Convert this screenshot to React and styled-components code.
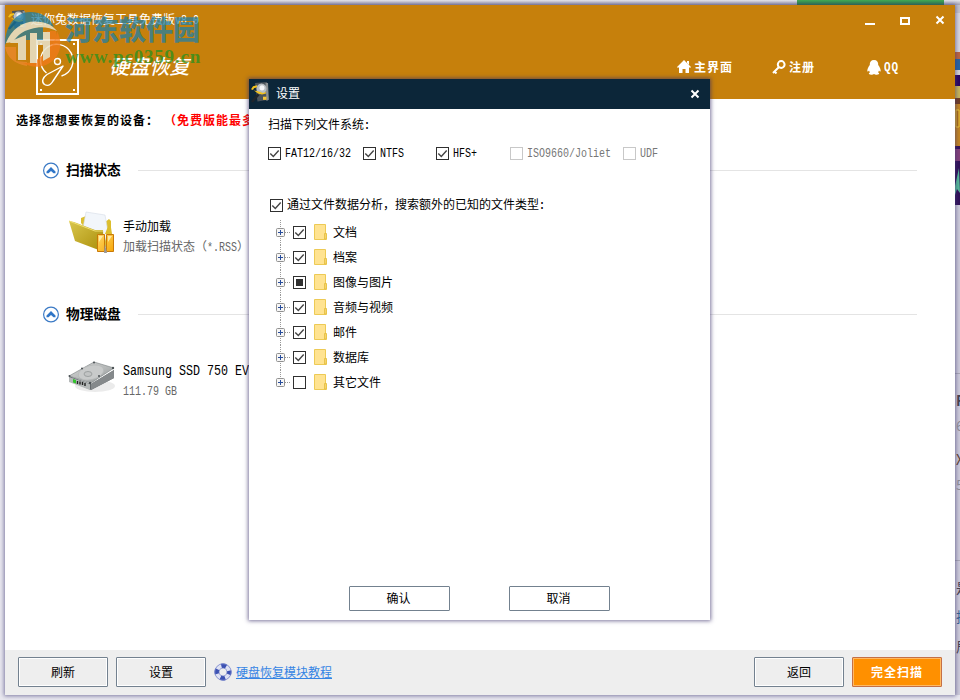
import React from "react";
import styled, { createGlobalStyle, css } from "styled-components";

const Global = createGlobalStyle`
  * { box-sizing: border-box; }
  html, body { margin: 0; padding: 0; width: 960px; height: 700px; overflow: hidden; }
  body { font: 12px/16px "Noto Sans CJK SC", sans-serif; color: #000; }
`;

const Desktop = styled.div`
  position: relative;
  width: 960px;
  height: 700px;
  background: #e9e8ef;
  display: grid;
  grid-template-rows: 5px 690px 5px;
  overflow: hidden;
`;
const TopStrip = styled.div`
  display: flex;
  padding-left: 797px;
  background: linear-gradient(#e6e6ec, #a3a3b4);
  &::after { content: ""; width: 147px; height: 5px; background: linear-gradient(#44ab55, #2b7f47); }
`;
const Middle = styled.div`
  display: grid;
  grid-template-columns: 5px 950px 5px;
`;
const Window = styled.main`
  grid-column: 2;
  position: relative;
  z-index: 1;
  background: #fff;
  display: flex;
  flex-direction: column;
  box-shadow: 0 0 4px 1px rgba(60, 55, 115, 0.62);
`;
const EdgeStrip = styled.div`
  width: 5px;
  height: 690px;
  overflow: hidden;
  background: #ceccda;
`;
const Header = styled.header`
  height: 94px;
  background: #c6800c;
  color: #fff;
  display: flex;
  flex-direction: column;
`;
const TitleBar = styled.div`
  height: 30px;
  display: flex;
  align-items: center;
  padding-left: 3px;
`;
const AppTitle = styled.span`
  margin-left: 5px;
  flex: 1;
`;
const Latin = styled.span`
  display: inline-block;
  font-family: "Liberation Mono", monospace;
  font-size: ${(p) => p.$size || 10}px;
  font-weight: ${(p) => (p.$bold ? 700 : 400)};
  transform: scaleY(1.2);
`;
const WindowButtons = styled.div`
  display: flex;
  width: 95px;
  svg { display: block; }
`;
const Banner = styled.div`
  height: 64px;
  display: flex;
  padding: 4px 0 0 31px;
`;
const BannerTitle = styled.h1`
  margin: 15px 0 0 29px;
  width: 90px;
  font-size: 20px;
  line-height: 24px;
  font-weight: 500;
  transform: skewX(-14deg);
`;
const Nav = styled.nav`
  flex: 1;
  display: grid;
  grid-template-columns: 95px 95px 88px;
  justify-content: end;
  padding-top: 19px;
`;
const NavItem = styled.a`
  display: flex;
  height: 18px;
  align-items: center;
  gap: 3px;
  font-weight: 700;
  letter-spacing: 1px;
`;
const Body = styled.section`
  flex: 1;
`;
const Prompt = styled.div`
  height: 42px;
  padding: 12px 0 0 11px;
  font-weight: 700;
  letter-spacing: 1px;
  line-height: 18px;
  white-space: nowrap;
`;
const Warning = styled.span`
  color: #f00;
  margin-left: 11px;
`;
const Group = styled.section`
  height: 144px;
  padding: 18px 38px 0 38px;
`;
const GroupHead = styled.div`
  display: flex;
  height: 22px;
  align-items: center;
  &::after { content: ""; flex: 1; height: 1px; background: #e4e4e4; }
`;
const GroupTitle = styled.h2`
  margin: -2px 0 0 6px;
  width: 72px;
  font-size: 13.7px;
  font-weight: 700;
`;
const Device = styled.div`
  display: flex;
  padding: ${(p) => p.$top || 30}px 0 0 25px;
`;
const DeviceText = styled.div`
  margin: ${(p) => (p.$disk ? -2 : 5)}px 0 0 7px;
  line-height: 20px;
  white-space: nowrap;
  small { display: block; margin-top: ${(p) => (p.$disk ? -1 : 0)}px; font-size: 12px; color: #666; }
`;
const Footer = styled.footer`
  height: 45px;
  background: #eee;
  display: flex;
  align-items: center;
  padding: 0 13px 1px;
`;
const Button = styled.button`
  width: 90px;
  height: 30px;
  margin-right: 8px;
  padding: 0;
  border: 1px solid #73818f;
  border-radius: 1px;
  box-shadow: inset 0 0 0 1px #fff;
  background: #eee;
  font: inherit;
  color: #000;
  ${(p) => p.$primary && css`
    margin-right: 0;
    background: #ff9000;
    border-color: #c57045;
    box-shadow: inset 0 0 0 1px #ffb963;
    color: #fff;
    font-weight: 700;
    letter-spacing: 1px;
  `}
  ${(p) => p.$dialog && css`
    width: 101px;
    height: 25px;
    margin: 0;
    background: #fff;
    padding: 0 2px 1px 0;
  `}
`;
const HelpLink = styled.a`
  flex: 1;
  display: flex;
  align-items: center;
  gap: 4px;
  color: #3584e4;
  span { border-bottom: 1px solid #3584e4; line-height: 13px; }
`;
const Dialog = styled.section`
  position: absolute;
  z-index: 3;
  left: 249px;
  top: 79px;
  width: 461px;
  height: 541px;
  background: #fff;
  box-shadow: 0 0 4px 1px rgba(55, 45, 105, 0.65);
  display: flex;
  flex-direction: column;
`;
const DialogBar = styled.header`
  height: 30px;
  background: #0c2639;
  color: #fff;
  display: flex;
  align-items: center;
  padding: 0 10px 3px 2px;
  span { flex: 1; margin-left: 7px; }
  svg:last-child { margin-top: 3px; }
`;
const DialogBody = styled.div`
  flex: 1;
  padding: 7px 20px 0 19px;
`;
const Systems = styled.div`
  display: grid;
  grid-template-columns: 95px 73px 74px 113px 60px;
  height: 20px;
  margin: 8px 0 32px;
  ${Latin} { margin-top: 3px; }
`;
const Check = styled.label`
  display: flex;
  align-items: center;
  gap: 4px;
  white-space: nowrap;
  color: ${(p) => (p.$off ? "#777" : "#000")};
`;
const AllTypes = styled.div`
  padding-left: 2px;
  height: 20px;
  display: flex;
  span { margin-top: 1px; }
`;
const Tree = styled.ul`
  margin: 5px 0 0 8px;
  padding: 0;
  list-style: none;
`;
const TreeRow = styled.li`
  height: 25px;
  display: flex;
  align-items: center;
  svg { display: block; }
`;
const TreeText = styled.span`
  margin-left: 6px;
  margin-top: -2px;
`;
const FolderGap = styled.span`
  margin: -1px 0 0 8px;
`;
const DialogActions = styled.div`
  display: flex;
  justify-content: center;
  gap: 59px;
  height: 34px;
`;
const Watermark = styled.div`
  position: absolute;
  z-index: 2;
  left: 4px;
  top: 10px;
  display: flex;
  pointer-events: none;
  svg { opacity: 0.86; }
`;
const WatermarkText = styled.div`
  margin-left: 3px;
  display: flex;
  flex-direction: column;
`;
const SiteName = styled.span`
  font: 900 27px/28px "Noto Sans CJK SC", sans-serif;
  color: rgba(28, 127, 170, 0.72);
  margin-top: 5px;
  white-space: nowrap;
`;
const SiteUrl = styled.span`
  font: 700 19px/20px "Liberation Serif", serif;
  color: rgba(45, 145, 30, 0.78);
  margin-top: 4px;
  letter-spacing: 0.8px;
`;

const Cross = () => (
  <svg width="10" height="10" viewBox="0 0 10 10"><path d="M1.5 1.5l7 7M8.5 1.5l-7 7" stroke="#fff" strokeWidth="2" /></svg>
);

const AppIcon = ({ size = 18, height = 20 }) => (
  <svg width={size} height={height} viewBox="0 0 18 20" preserveAspectRatio="none">
    <path d="M4 1l12-1 1.500 17-11 1.500z" fill="#4c545b" />
    <path d="M14.500 1H17l.8 16-2.300 1z" fill="#8b9092" />
    <circle cx="10.500" cy="6.500" r="5" fill="#b9bec2" />
    <circle cx="11" cy="5.500" r="2.500" fill="#f4f5f6" />
    <path d="M6 3L2 4 0 7l2 .5 1-1.500L6 5zM3 8l5 1 4 1.500 3-1v1.500l-4 1-4-1z" fill="#f3c21d" />
    <path d="M0 18.500L6.500 11l2 1.500L2 19.500z" fill="#20252b" />
    <path d="M12 14h3.500v3H12z" fill="#f4c536" />
  </svg>
);

const BannerDrive = () => (
  <svg width="44" height="58" viewBox="0 0 44 58" fill="none" stroke="#fff">
    <rect x="1" y="1" width="41" height="54" strokeWidth="2" />
    <path d="M10.500 34a16.200 16.200 0 1 1 15 3" strokeWidth="1.400" />
    <circle cx="21.500" cy="22.500" r="3" strokeWidth="1.400" />
    <path d="M27 27L11 35.500C6 39 5.500 43 8.500 45.500 12 47.500 15 45.500 17 42z" strokeWidth="1.400" strokeLinejoin="round" />
    <g fill="#fff" stroke="none"><rect x="4" y="4" width="2" height="2" /><rect x="37" y="4" width="2" height="2" /><rect x="4" y="50" width="2" height="2" /><rect x="37" y="50" width="2" height="2" /></g>
  </svg>
);

const HomeIcon = () => (
  <svg width="14" height="14" viewBox="0 0 14 14" fill="#fff"><path d="M7 0l7 7-1 1-1-1v6H8.500V9h-3v4H2V7L1 8 0 7z" /><path d="M10 1h2v4l-2-2z" /></svg>
);
const KeyIcon = () => (
  <svg width="14" height="14" viewBox="0 0 14 14"><circle cx="9.200" cy="4.500" r="3.400" fill="none" stroke="#fff" strokeWidth="2" /><path d="M7 7l-6 6M2.500 11.500l2 2" stroke="#fff" strokeWidth="2" /></svg>
);
const QQIcon = () => (
  <svg width="14" height="15" viewBox="0 0 14 15" fill="#fff"><path d="M7 0C4 0 2.500 2 2.800 5 1.500 7 .5 8 .3 11c.4 1 1.200.4 1.700-.5.300.8.500 1.200 1 1.700-1 .6-1.500 1.200-1 1.800 1 1 4 .8 5 0 1 .8 4 1 5 0 .5-.6 0-1.200-1-1.800.5-.5.700-.9 1-1.700.5.900 1.300 1.500 1.700.5-.2-3-1.200-4-2.500-6C11.500 2 10 0 7 0z" /></svg>
);
const Chevron = () => (
  <svg width="17" height="17" viewBox="0 0 17 17"><circle cx="8" cy="8.500" r="7.400" fill="#fff" stroke="#3b7ac5" strokeWidth="1.200" /><path d="M3.500 9.500L8 5l4.500 4.500v1.800h-2L8 9l-2.500 2.300h-2z" fill="#2f75c7" /></svg>
);

const OpenFolder = () => (
  <svg width="48" height="43" viewBox="0 0 48 43">
    <defs>
      <linearGradient id="folder" x1="0" y1="0" x2="1" y2="1"><stop offset="0" stopColor="#d9c64c" /><stop offset="1" stopColor="#a98d08" /></linearGradient>
      <linearGradient id="bar" x1="0" y1="0" x2="1" y2="1"><stop offset="0" stopColor="#ffd766" /><stop offset="1" stopColor="#f7a708" /></linearGradient>
    </defs>
    <path d="M13 12V7l5-2 18 7 5-4 2 2v19l-7 9z" fill="#dcbf31" />
    <path d="M18 1l19 3 3 17-4 11-21-15z" fill="#f2f6fb" stroke="#d5dce6" strokeWidth=".6" />
    <path d="M1 10l5 1 21 8 8 0 1 22-29-11z" fill="url(#folder)" />
    <path d="M1 10l26 10h8" fill="none" stroke="#f0df70" />
    <path d="M37 23l5-13 2 13z" fill="#dcbd2b" />
    <path d="M29.500 23.500h7v17h-7zM38.500 23.500h7v17h-7z" fill="url(#bar)" stroke="#c97907" />
    <path d="M31 25h4l-4 6zM40 25h4l-4 6z" fill="#fff2bd" opacity=".8" />
    <path d="M37 33l2 9h-3z" fill="#999" />
  </svg>
);

const HardDrive = () => (
  <svg width="48" height="34" viewBox="0 0 48 34">
    <defs><linearGradient id="metal" x1="0" y1="0" x2="1" y2="1"><stop offset="0" stopColor="#d8d8d8" /><stop offset=".55" stopColor="#b5b8b8" /><stop offset="1" stopColor="#8b8f8f" /></linearGradient></defs>
    <ellipse cx="27" cy="25" rx="20" ry="6" fill="#ddd" opacity=".6" />
    <path d="M1 15l22 8 23-14v8L23 29 1 20z" fill="#64696c" />
    <path d="M23 23l23-14v8L23 29z" fill="#85898b" />
    <path d="M1 15L26 1l20 6-23 15z" fill="url(#metal)" stroke="#777d80" strokeWidth=".6" />
    <ellipse cx="23" cy="11.500" rx="13" ry="7" fill="#c8caca" stroke="#b3b5b5" strokeWidth=".6" transform="rotate(-15 23 11.500)" />
    <ellipse cx="20" cy="13" rx="4" ry="2.500" fill="#c2c4c4" stroke="#8d9191" strokeWidth=".7" />
    <path d="M1 16l21 7v6L1 21z" fill="#b5b9b9" />
    <path d="M5 18l3 1v3.500l-3-1z" fill="#30c32a" />
    <path d="M9.500 20v3M12 20.500v3M14.500 21v3M17 22v3" stroke="#222" strokeWidth="1.400" />
    <g fill="#4b5154"><circle cx="1.500" cy="15" r="1" /><circle cx="22" cy="22" r="1.200" /><circle cx="26" cy="1.500" r="1" /><circle cx="45" cy="7" r="1.200" /><circle cx="31" cy="15" r="1" /><circle cx="14" cy="7.500" r="1" /></g>
  </svg>
);

const BoxIcon = ({ state, off }) => (
  <svg width="13" height="13" viewBox="0 0 13 13">
    <rect x=".5" y=".5" width="12" height="12" fill="#fff" stroke={off ? "#c8c8c8" : "#303030"} />
    {state === "on" && <path d="M2.300 6.500l3 3 5.400-6" fill="none" stroke="#444" strokeWidth="1.400" />}
    {state === "part" && <rect x="3" y="3" width="7" height="7" fill="#303030" />}
  </svg>
);

const Branch = ({ last }) => (
  <svg width="17" height="25" viewBox="0 0 17 25">
    <path d={last ? "M4.500 0v12" : "M4.500 0v25"} stroke="#999" strokeDasharray="1 1" />
    <path d="M9 12.500h5" stroke="#999" strokeDasharray="1 1" />
    <rect x=".5" y="8.500" width="8" height="8" rx="1" fill="#f6f6f6" stroke="#919191" />
    <path d="M2 12.500h5M4.500 10v5" stroke="#264b9b" />
  </svg>
);
const FolderIcon = () => (
  <svg width="13" height="16" viewBox="0 0 13 16">
    <path d="M.5.5h11v9h1v6H.5z" fill="#ffe391" stroke="#edca55" />
    <path d="M10.500 15V9.500H12V15z" fill="#ffe391" stroke="#e3bb39" strokeWidth=".8" />
  </svg>
);

const Lifebuoy = () => (
  <svg width="18" height="18" viewBox="0 0 18 18">
    <circle cx="9" cy="9" r="6.200" fill="none" stroke="#dfe2f3" strokeWidth="4.500" />
    <circle cx="9" cy="9" r="6.200" fill="none" stroke="#3c51b3" strokeWidth="4.500" strokeDasharray="4.870 4.870" strokeDashoffset="2.435" />
    <circle cx="9" cy="9" r="8.200" fill="none" stroke="#7583c9" strokeWidth=".8" />
    <circle cx="9" cy="9" r="4" fill="none" stroke="#7583c9" strokeWidth=".6" />
  </svg>
);

const SiteLogo = () => (
  <svg width="58" height="58" viewBox="0 0 58 58">
    <path d="M1 35C1 14 13 2 26 2c12 0 20 6 24 15-10-5-19-6-27-3C12 17 6 25 1 35z" fill="#197ca6" opacity=".85" />
    <path d="M9 28c6-8 15-11 30-11v13H8z" fill="#197ca6" opacity=".82" />
    <path d="M2 33C8 17 22 9 37 12c7 1 12 4 16 9-8-4-17-5-26-2-9 2-14 7-18 13z" fill="#e9e4cd" />
    <path d="M1 37h11v14l11 1v4C10 54 3 47 1 37z" fill="#f08a32" opacity=".8" />
    <path d="M53 21c7 13 3 28-11 34-8 3-16 2-23-2 8 0 13-2 17-6 9-4 15-14 17-26z" fill="#f27a1a" opacity=".9" />
    <path d="M43 21h9c1 14-5 23-13 28V30h4z" fill="#f27a1a" opacity=".85" />
    <path d="M7 31l15-6v25h-8V33H6zM26 23h7v7h6v-8h7v25l-7 4V35h-6v18h-7z" fill="#e9e4cd" />
  </svg>
);

const EdgeDetail = () => (
  <svg width="5" height="690" viewBox="0 0 5 690">
    <path d="M0 0h5v8H0z" fill="#c5c4cc" /><path d="M0 8h5v39H0z" fill="#d8d7df" />
    <path d="M0 47h5v7H0z" fill="#bd6540" /><path d="M0 54h5v11H0z" fill="#2465a4" />
    <path d="M0 65h5v5H0z" fill="#d5d4d8" /><path d="M0 70h5v11H0z" fill="#28045f" />
    <path d="M0 81h5v12H0z" fill="#c7b559" /><path d="M0 93h5v6H0z" fill="#713d22" />
    <path d="M0 99h5v42H0z" fill="#c48522" /><path d="M1 105h3v17H1z" stroke="#f0ce36" fill="#ad6b15" />
    <path d="M0 141h5v59H0z" fill="#321158" /><path d="M0 144h5v12H0z" fill="#834079" /><path d="M0 181l4-18 1 25-3-4-2 6z" fill="#56bd99" />
    <path d="M0 368.500h5M0 555.500h5" stroke="#aaa8b5" />
  </svg>
);
const EdgeWrap = styled.aside`
  position: absolute;
  z-index: 2;
  right: 0;
  top: 5px;
  width: 4px;
  height: 690px;
  overflow: hidden;
`;
const EdgeLetters = styled.div`
  padding-top: ${(p) => p.$top}px;
  font-size: 14px;
  line-height: 20px;
  color: ${(p) => p.$color || "#474151"};
  font-weight: ${(p) => (p.$bold ? 700 : 400)};
`;

const systems = [
  ["FAT12/16/32", "on"], ["NTFS", "on"], ["HFS+", "on"], ["ISO9660/Joliet", "", true], ["UDF", "", true],
];
const types = [
  ["文档", "on"], ["档案", "on"], ["图像与图片", "part"], ["音频与视频", "on"], ["邮件", "on"], ["数据库", "on"], ["其它文件", ""],
];

export default function App() {
  return (
    <Desktop>
      <Global />
      <TopStrip />
      <Middle>
        <Window>
          <Header>
            <TitleBar>
              <AppIcon />
              <AppTitle>迷你兔数据恢复工具免费版<Latin>v8.0</Latin></AppTitle>
              <WindowButtons>
                <svg width="90" height="14" viewBox="0 0 90 14"><path d="M5 11h10" stroke="#fff" strokeWidth="2" /><path d="M41 5h8v6h-8z" stroke="#fff" strokeWidth="2" fill="none" /><path d="M76.500 3.500l7 7M83.500 3.500l-7 7" stroke="#fff" strokeWidth="2" /></svg>
              </WindowButtons>
            </TitleBar>
            <Banner>
              <BannerDrive />
              <BannerTitle>硬盘恢复</BannerTitle>
              <Nav>
                <NavItem><HomeIcon />主界面</NavItem>
                <NavItem><KeyIcon />注册</NavItem>
                <NavItem><QQIcon /><Latin $bold $size={11}>QQ</Latin></NavItem>
              </Nav>
            </Banner>
          </Header>
          <Body>
            <Prompt>选择您想要恢复的设备：<Warning>（免费版能最多</Warning></Prompt>
            <Group>
              <GroupHead><Chevron /><GroupTitle>扫描状态</GroupTitle></GroupHead>
              <Device><OpenFolder /><DeviceText>手动加载<small>加载扫描状态（<Latin>*.RSS</Latin>）</small></DeviceText></Device>
            </Group>
            <Group>
              <GroupHead><Chevron /><GroupTitle>物理磁盘</GroupTitle></GroupHead>
              <Device $top={36}><HardDrive /><DeviceText $disk><Latin $size={11.67}>Samsung SSD 750 EVO</Latin><small><Latin>111.79 GB</Latin></small></DeviceText></Device>
            </Group>
          </Body>
          <Footer>
            <Button>刷新</Button>
            <Button>设置</Button>
            <HelpLink><Lifebuoy /><span>硬盘恢复模块教程</span></HelpLink>
            <Button>返回</Button>
            <Button $primary>完全扫描</Button>
          </Footer>
        </Window>
        <EdgeStrip><EdgeDetail /></EdgeStrip>
      </Middle>
      <EdgeWrap>
        <EdgeLetters $top={385} $bold>F</EdgeLetters>
        <EdgeLetters $top={5} $color="#8b8994">6</EdgeLetters>
        <EdgeLetters $top={14} $color="#604238">X</EdgeLetters>
        <EdgeLetters $top={5} $color="#8b8994">5</EdgeLetters>
        <EdgeLetters $top={83}>是</EdgeLetters>
        <EdgeLetters $top={9} $color="#365e90">据</EdgeLetters>
        <EdgeLetters $top={10}>居</EdgeLetters>
      </EdgeWrap>
      <Watermark>
        <SiteLogo />
        <WatermarkText><SiteName>河东软件园</SiteName><SiteUrl>www.pc0359.cn</SiteUrl></WatermarkText>
      </Watermark>
      <Dialog>
        <DialogBar><AppIcon size={18} height={21} /><span>设置</span><Cross /></DialogBar>
        <DialogBody>
          扫描下列文件系统<Latin $bold>:</Latin>
          <Systems>
            {systems.map(([name, state, off]) => <Check key={name} $off={off}><BoxIcon state={state} off={off} /><Latin>{name}</Latin></Check>)}
          </Systems>
          <AllTypes><Check><BoxIcon state="on" /><span>通过文件数据分析，搜索额外的已知的文件类型<Latin $bold>:</Latin></span></Check></AllTypes>
          <Tree>
            {types.map(([name, state], i) => (
              <TreeRow key={name}><Branch last={i === types.length - 1} /><BoxIcon state={state} /><FolderGap><FolderIcon /></FolderGap><TreeText>{name}</TreeText></TreeRow>
            ))}
          </Tree>
        </DialogBody>
        <DialogActions><Button $dialog>确认</Button><Button $dialog>取消</Button></DialogActions>
      </Dialog>
    </Desktop>
  );
}
